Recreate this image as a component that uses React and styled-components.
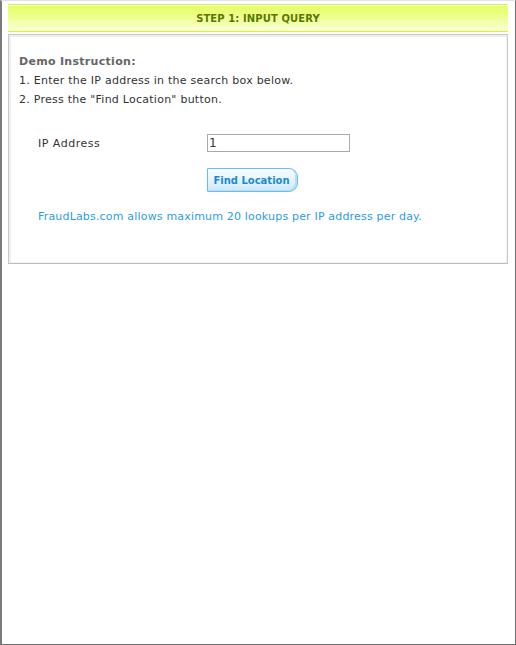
import React from "react";
import styled, { createGlobalStyle } from "styled-components";

const Global = createGlobalStyle`
  html, body { margin: 0; padding: 0; background: #ffffff; }
  body { font-family: "DejaVu Sans", Verdana, sans-serif; }
  * { box-sizing: border-box; }
`;

const Frame = styled.div`
  width: 516px;
  height: 645px;
  border-top: 1px solid #e2e2e2;
  border-left: 2px solid #7b7b7b;
  border-right: 1px solid #6e6e6e;
  border-bottom: 1px solid #6e6e6e;
  padding: 3px 7px 0 6px;
  background: #ffffff;
`;

const Header = styled.div`
  height: 28px;
  border-top: 1px solid #d4f53a;
  border-bottom: 1px solid #d4f53a;
  box-shadow: inset 0 1px 0 #ffffff;
  background: linear-gradient(to bottom, #e6ff5e 0%, #eeff8f 45%, #f8ffd6 100%);
  display: flex;
  align-items: center;
  justify-content: center;
  font-size: 10px;
  font-weight: bold;
  color: #5a7800;
  letter-spacing: 0.1px;
`;

const Panel = styled.div`
  margin-top: 2px;
  border: 1px solid #c9c9c9;
  border-bottom-color: #bdbdbd;
  box-shadow: inset 2px 2px 0 #efefef, inset -1px -1px 0 #f3f3f3;
  padding: 17px 10px 39px 10px;
  color: #333333;
  font-size: 11px;
`;

const Line = styled.div`
  line-height: 19px;
  font-weight: ${(p) => (p.$bold ? "bold" : "normal")};
  color: ${(p) => (p.$bold ? "#666666" : "#333333")};
  letter-spacing: ${(p) => (p.$bold ? "0.3px" : "0.25px")};
`;

const Form = styled.div`
  margin-top: 25px;
  padding-left: 19px;
  display: grid;
  grid-template-columns: 169px auto;
  align-items: center;
`;

const Label = styled.div`
  font-size: 11px;
  color: #333333;
  letter-spacing: 0.5px;
`;

const Input = styled.input`
  width: 143px;
  height: 18px;
  border: 1px solid #a9a9a9;
  padding: 0 1px;
  margin: 0;
  font-family: "DejaVu Sans", sans-serif;
  font-size: 12px;
  color: #333333;
  outline: none;
  background: #ffffff;
`;

const Button = styled.button`
  grid-column: 2;
  justify-self: start;
  margin-top: 16px;
  width: 91px;
  height: 24px;
  padding: 0 2px 0 0;
  border: 1px solid #66bdf0;
  border-radius: 1px 9px 9px 1px;
  background: linear-gradient(to bottom, #f7fcff 0%, #e6f4fe 50%, #cce8fb 100%);
  box-shadow: inset -2px -1px 0 #b9dff7;
  font-family: "DejaVu Sans", sans-serif;
  font-size: 10px;
  font-weight: bold;
  color: #1c89d2;
  cursor: pointer;
`;

const Note = styled.div`
  margin-top: 17px;
  padding-left: 19px;
  line-height: 15px;
  font-size: 11px;
  color: #2c9ce4;
  letter-spacing: 0.18px;
`;

export default function App() {
  return (
    <>
      <Global />
      <Frame>
        <Header>STEP 1: INPUT QUERY</Header>
        <Panel>
          <Line $bold>Demo Instruction:</Line>
          <Line>1. Enter the IP address in the search box below.</Line>
          <Line>2. Press the "Find Location" button.</Line>
          <Form>
            <Label>IP Address</Label>
            <Input type="text" defaultValue="1" autoFocus />
            <Button type="button">Find Location</Button>
          </Form>
          <Note>FraudLabs.com allows maximum 20 lookups per IP address per day.</Note>
        </Panel>
      </Frame>
    </>
  );
}
